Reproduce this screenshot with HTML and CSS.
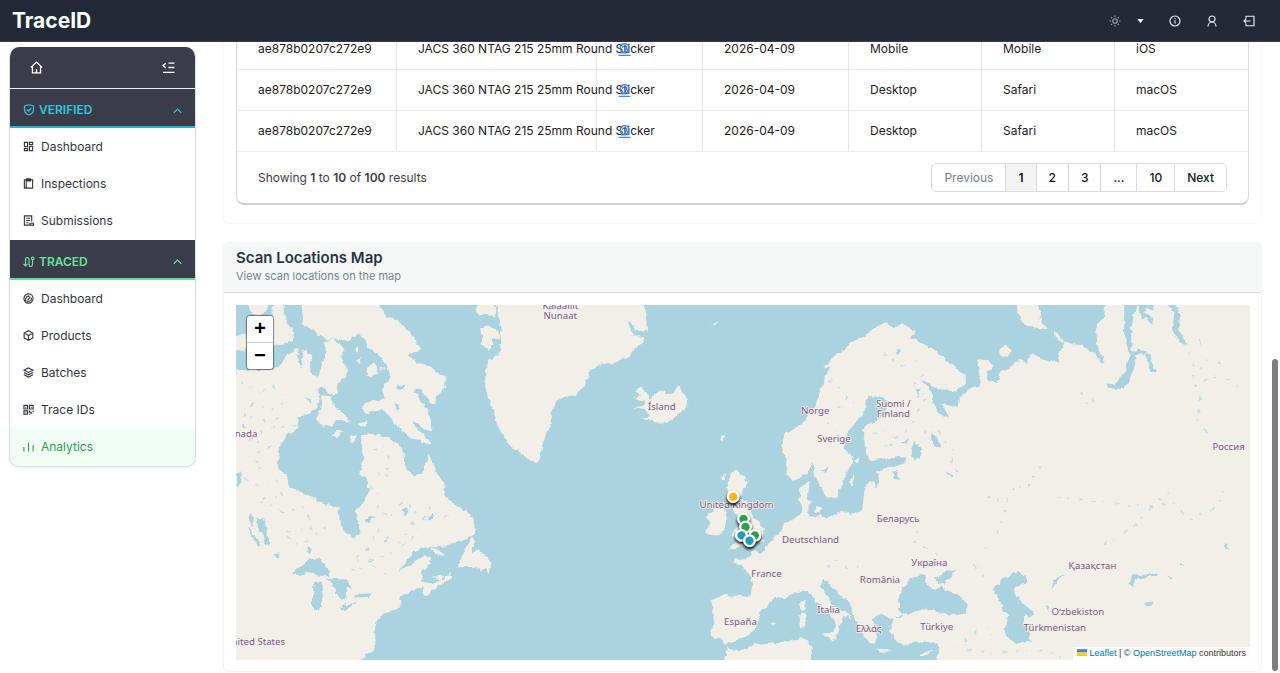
FILE: index.html
```html
<!DOCTYPE html>
<html lang="en">
<head>
<meta charset="utf-8">
<meta name="viewport" content="width=device-width, initial-scale=1">
<title>TraceID - Analytics</title>
<link rel="stylesheet" href="styles.css">
</head>
<body>
<header class="topbar">
  <a class="brand" href="#">TraceID</a>
  <nav class="topbar-actions" aria-label="Account">
    <button class="icon-btn theme-btn" type="button" aria-label="Theme">
      <svg class="sun" viewBox="0 0 24 24"><circle cx="12" cy="12" r="4.5"/><path d="M12 1v3M12 20v3M1 12h3M20 12h3M4.2 4.2l2.1 2.1M17.7 17.7l2.1 2.1M4.2 19.8l2.1-2.1M17.7 6.3l2.1-2.1"/></svg>
      <svg class="caret" viewBox="0 0 8 5"><path d="M0 0h8L4 5z"/></svg>
    </button>
    <button class="icon-btn" type="button" aria-label="Information"><svg viewBox="0 0 24 24"><circle cx="12" cy="12" r="10"/><path d="M12 11v6M12 6.5v2"/></svg></button>
    <button class="icon-btn" type="button" aria-label="Profile"><svg viewBox="0 0 24 24"><circle cx="12" cy="8" r="6"/><path d="M4 23c0-5 3.500-9 8-9s8 4 8 9"/></svg></button>
    <button class="icon-btn" type="button" aria-label="Log out"><svg viewBox="0 0 24 24"><path d="M6 7V2.500h16v19H6V17M15 12H2M6 8l-4 4 4 4"/></svg></button>
  </nav>
</header>

<div class="layout">
  <aside class="sidebar">
    <div class="sidebar-tools">
      <a href="#" aria-label="Home"><svg viewBox="0 0 24 24"><path d="M1.500 12L12 2l10.500 10M4.500 10v12h15V10M12 22v-7"/></svg></a>
      <button type="button" aria-label="Collapse menu"><svg viewBox="0 0 24 24"><path d="M12 4h11M12 12h11M2 21h21M7 4L2 8.500 7 13"/></svg></button>
    </div>
    <button class="group-head verified" type="button" aria-expanded="true">
      <svg viewBox="0 0 24 24"><path d="M12 22C6 20 3 16 3 11V4l9-2.500L21 4v7c0 5-3 9-9 11zM7.500 11l3.500 3.500 5.500-6"/></svg>
      <span>VERIFIED</span>
      <svg class="chevron" viewBox="0 0 24 24"><path d="M2 18l10-10 10 10"/></svg>
    </button>
    <nav class="menu" aria-label="Verified">
      <a href="#"><svg viewBox="0 0 24 24"><path d="M3 3h7v9H3zM14 3h7v5h-7zM14 12h7v9h-7zM3 16h7v5H3z"/></svg>Dashboard</a>
      <a href="#"><svg viewBox="0 0 24 24"><path d="M3 4h18v18H3zM8 1.500h8v5H8zM7 6v15"/></svg>Inspections</a>
      <a href="#"><svg viewBox="0 0 24 24"><path d="M19 14V2H3v20h12M7 7h8M7 12h8M7 17h5M15 18h8v4h-8z"/></svg>Submissions</a>
    </nav>
    <button class="group-head traced" type="button" aria-expanded="true">
      <svg viewBox="0 0 24 24"><path d="M1 16l4 4 4-4M5 20V8q0-5 3.500-5T12 8v8q0 5 3.500 5t3.500-5V7"/><circle cx="19.500" cy="4.500" r="2.500"/></svg>
      <span>TRACED</span>
      <svg class="chevron" viewBox="0 0 24 24"><path d="M2 18l10-10 10 10"/></svg>
    </button>
    <nav class="menu" aria-label="Traced">
      <a href="#"><svg viewBox="0 0 24 24"><circle cx="12" cy="12" r="10"/><path d="M6 18c-2-7 2-12 8-11M18 10c1 3 0 6-1 8M10 16l6-8M8 18h8"/></svg>Dashboard</a>
      <a href="#"><svg viewBox="0 0 24 24"><path d="M12 1.500l9.500 5v11l-9.500 5-9.500-5v-11zM2.500 6.500L12 12l9.500-5.500M12 12v10.500"/></svg>Products</a>
      <a href="#"><svg viewBox="0 0 24 24"><path d="M12 2l10 5-10 5L2 7zM2 12l10 5 10-5M2 17l10 5 10-5"/></svg>Batches</a>
      <a href="#"><svg viewBox="0 0 24 24"><path d="M2 3h8v8H2zM14 3h8v8h-8zM2 15h8v7H2zM14 14v4h4v4M22 14v4M14 22h2M22 21v1M6 6v2M18 6v2M6 18v1"/></svg>Trace IDs</a>
      <a href="#" class="active" aria-current="page"><svg viewBox="0 0 24 24"><path d="M2 13v10M12 3v20M22 9v14"/></svg>Analytics</a>
    </nav>
  </aside>

  <main class="content">
    <section class="panel scans">
      <div class="table-card">
        <table>
          <colgroup><col class="c-id"><col class="c-product"><col class="c-place"><col class="c-date"><col class="c-third"><col class="c-third"><col></colgroup>
          <tbody>
            <tr><td>ae878b0207c272e9</td><td>JACS 360 NTAG 215 25mm Round Sticker</td><td><a href="#" aria-label="Scan place"><svg viewBox="0 0 24 24"><circle cx="12" cy="9" r="8"/><path d="M1 23h22M8 9a4 4 0 1 1 5 4v4M5 18h10M18 10v9"/></svg></a></td><td>2026-04-09</td><td>Mobile</td><td>Mobile</td><td>iOS</td></tr>
            <tr><td>ae878b0207c272e9</td><td>JACS 360 NTAG 215 25mm Round Sticker</td><td><a href="#" aria-label="Scan place"><svg viewBox="0 0 24 24"><circle cx="12" cy="9" r="8"/><path d="M1 23h22M8 9a4 4 0 1 1 5 4v4M5 18h10M18 10v9"/></svg></a></td><td>2026-04-09</td><td>Desktop</td><td>Safari</td><td>macOS</td></tr>
            <tr><td>ae878b0207c272e9</td><td>JACS 360 NTAG 215 25mm Round Sticker</td><td><a href="#" aria-label="Scan place"><svg viewBox="0 0 24 24"><circle cx="12" cy="9" r="8"/><path d="M1 23h22M8 9a4 4 0 1 1 5 4v4M5 18h10M18 10v9"/></svg></a></td><td>2026-04-09</td><td>Desktop</td><td>Safari</td><td>macOS</td></tr>
          </tbody>
        </table>
        <div class="table-foot">
          <p>Showing <b>1</b> to <b>10</b> of <b>100</b> results</p>
          <nav class="pager" aria-label="Pages">
            <button type="button" disabled>Previous</button><button type="button" class="current" aria-current="page">1</button><button type="button">2</button><button type="button">3</button><button type="button">...</button><button type="button">10</button><button type="button">Next</button>
          </nav>
        </div>
      </div>
    </section>

    <section class="panel map-panel">
      <div class="panel-head">
        <h2>Scan Locations Map</h2>
        <p>View scan locations on the map</p>
      </div>
      <div class="map">
        <svg class="map-art" viewBox="18 15 3039 1065" preserveAspectRatio="xMidYMid slice" role="img" aria-label="Map of the North Atlantic and Europe">
          <defs>
            <filter id="coast" filterUnits="userSpaceOnUse" x="0" y="0" width="3080" height="1100">
              <feTurbulence type="fractalNoise" baseFrequency="0.05" numOctaves="3" seed="4" result="n"/>
              <feDisplacementMap in="SourceGraphic" in2="n" scale="18" xChannelSelector="R" yChannelSelector="G"/>
            </filter>
          </defs>
          <g filter="url(#coast)">
          <g class="land">
            <!-- North America -->
            <path d="M-20 1110V210H130L150 195 175 165 198 148 205 170 210 208 219 180 216 158 232 150 245 178 240 215 262 235 272 190 285 175 283 125 310 120 342 145 335 175 345 200 350 225 325 250 320 262 325 282 305 290 275 262 262 268 268 285 262 320 240 340 205 352 205 385 170 405 145 455 143 510 165 520 180 565 240 590 290 615 325 622 330 675 345 695 370 718 385 700 382 650 375 630 405 605 418 570 405 535 388 515 402 480 392 440 396 405 430 402 470 410 500 430 520 450 522 495 555 530 580 515 590 480 598 465 620 520 645 560 642 590 690 625 712 640 732 665 735 700 690 725 640 740 600 742 570 743 530 780 505 818 540 795 575 768 600 770 602 790 575 815 572 838 600 850 640 840 648 825 660 818 668 832 620 860 588 890 575 880 580 858 545 872 512 890 510 905 515 920 460 940 440 965 432 1000 437 1020 430 1050 395 1075 380 1110Z"/>
            <path d="M275 285L300 290 312 322 355 350 355 365 320 362 300 378 280 380 258 360 270 330Z"/>
            <path d="M45-10H118L110 38 75 45 60 35ZM130-10H157L165 60 182 85 190 120 160 132 120 135ZM0 105H50V150H0Z"/>
            <path d="M212-10L218 50 220 75 250 90 270 110 285 118 330 120 360 122 385 100 400 112 412 140 440 160 470 195 482 230 455 270 465 295 440 305 405 305 395 325 405 340 455 330 480 350 500 380 540 410 595 435 600 425 580 400 545 370 545 360 580 385 605 392 602 350 570 300 552 268 570 270 590 295 615 318 618 290 645 260 645 235 600 200 560 190 535 165 567 150 560 125 540 95 500 60 470 50 450 20 440-10Z"/>
            <path d="M410 205L425 190 440 198 442 222 425 232 410 228ZM448 200L466 205 455 210ZM308 405L320 388 334 390 322 412ZM362 405L376 403 374 425 364 425ZM388 372L410 362 412 370 398 380ZM375 150L388 142 385 162ZM378 180L390 175 385 192ZM600 745L615 745 645 765 625 767ZM600 825L620 832 642 828 628 842Z"/>
            <path d="M725 710L736 722 722 752 742 753 765 765 775 775 782 800 778 820 765 805 750 814 745 800 682 802 695 775 705 745Z"/>
            <!-- Greenland and the North Atlantic islands -->
            <path d="M795-10L805 50 815 80 810 110 810 150 795 175 772 180 765 215 765 265 775 290 790 340 800 370 820 410 850 450 870 455 895 480 920 488 930 470 935 440 945 405 965 370 960 340 985 295 1030 290 1065 260 1080 210 1095 200 1150 190 1195 170 1245 113 1215 107 1200 88 1192 62 1206 65 1215 88 1250 98 1248 60 1235-10Z"/>
            <path d="M735 25L760 5H795V50L770 45 745 50ZM750 85L780 80 810 100 805 118 780 115 790 135 775 150 755 135Z"/>
            <path d="M1208 296L1230 288 1214 272 1232 260 1250 278 1258 300 1270 282 1285 278 1300 272 1320 285 1335 265 1348 260 1355 278 1372 295 1374 315 1355 335 1335 355 1295 372 1265 360 1232 354 1255 345 1240 327 1212 322 1245 315 1240 302Z"/>
            <path d="M1440 80L1462 64 1456 76ZM1468 406L1484 410 1474 422Z"/>
            <!-- Britain and Ireland -->
            <path d="M1500 520L1520 508 1535 525 1552 548 1535 575 1525 590 1545 605 1565 640 1585 670 1604 690 1590 712 1602 722 1570 735 1535 735 1515 745 1490 750 1520 720 1505 705 1525 680 1520 650 1510 630 1515 605 1495 590 1490 560ZM1425 702L1440 672 1428 650 1450 628 1480 625 1490 645 1482 690 1455 706ZM1472 540L1482 520 1484 540Z"/>
            <!-- Eurasia -->
            <path d="M1655 425L1665 400 1695 385 1720 365 1745 330 1765 290 1780 240 1803 203 1775 205 1820 160 1860 130 1905 105 1940 80 1970 65 1985 85 2020 72 2052 100 2040 115 2075 128 2110 150 2160 190 2202 225 2202 255 2170 277 2130 270 2100 252 2072 240 2105 280 2110 320 2130 348 2155 352 2135 312 2180 322 2190 290 2220 265 2250 260 2248 215 2236 178 2270 180 2290 200 2265 215 2270 240 2300 247 2306 220 2340 200 2370 175 2390 192 2400 163 2440 180 2485 187 2485 160 2500 130 2530 130 2570 145 2610 185 2622 190 2600 140 2595 80 2620 50 2625-10H3090V1110H2118L2125 1030 2095 1030 2060 1025 2020 1037 1990 1020 1978 990 1985 957 1970 945 1940 945 1925 955 1937 975 1940 1000 1930 1030 1915 1025 1895 1000 1880 975 1872 945 1860 915 1830 885 1800 860 1795 840 1775 840 1768 855 1790 890 1815 920 1850 940 1858 957 1835 945 1832 965 1820 1002 1808 997 1815 965 1790 935 1755 905 1735 875 1710 870 1690 885 1660 895 1630 890 1605 925 1590 935 1580 970 1555 1005 1505 1025 1490 1037 1475 1018 1443 1015 1440 990 1450 960 1440 900 1480 885 1560 890 1566 850 1545 805 1508 785 1515 773 1545 778 1562 770 1565 752 1590 758 1620 725 1640 705 1665 665 1705 652 1715 630 1702 600 1710 560 1737 546 1732 590 1742 610 1725 640 1735 650 1765 648 1800 648 1835 635 1865 642 1895 625 1902 570 1908 550 1925 545 1935 530 1940 512 1980 500 2025 490 2025 472 1970 475 1910 482 1903 460 1900 385 1925 370 1960 345 1972 310 1960 295 1925 288 1910 290 1905 330 1875 370 1850 400 1840 440 1866 475 1860 500 1840 530 1830 570 1815 592 1790 597 1775 570 1755 530 1745 490 1735 510 1715 530 1690 542 1665 520 1668 480 1655 450Z"/>
            <path d="M2358-10L2360 45 2385 75 2410 82 2452 90 2430 60 2418-10ZM2465 97L2480 98 2502 128 2485 126ZM2308 150L2322 138 2338 150 2330 168 2312 170Z"/>
            <path d="M1755 618L1772 620 1770 642 1755 635ZM1858 540L1872 530 1862 560ZM1870 478L1888 476 1880 488ZM1710 905L1722 902 1722 932 1712 930ZM1706 940L1726 938 1724 975 1712 985ZM1770 1000L1822 998 1812 1025ZM1936 1048L1985 1052 1960 1058ZM2068 1062L2105 1045 2095 1062 2078 1068ZM1616 970L1634 966 1630 978ZM1650 965L1660 968Z"/>
            <path d="M1475 1110L1488 1045 1530 1052 1580 1030 1660 1025 1728 1015 1735 1030 1747 1045 1735 1110Z"/>
          </g>
          <g class="water">
            <!-- Inland seas and gulfs -->
            <path d="M2020 860L2035 838 2070 822 2085 835 2090 858 2120 868 2132 858 2145 868 2185 885 2212 915 2205 940 2170 945 2130 937 2090 925 2050 935 2030 947 2005 930 2005 900 2015 870ZM2108 838L2135 818 2178 810 2160 830 2140 850 2125 848ZM1990 950L2018 944 2008 954Z"/>
            <path d="M2290 865L2320 830 2365 815 2386 830 2382 855 2355 860 2345 870 2375 910 2390 918 2410 940 2395 950 2380 945 2380 970 2395 1000 2400 1025 2360 1030 2325 1010 2325 970 2335 950 2310 915 2295 880Z"/>
            <path d="M2680-10V50L2680 110 2695 165 2685 215 2655 250 2622 248 2635 265 2675 267 2695 240 2710 200 2710 166 2740 162 2755 190 2758 215 2778 218 2762 190 2755 165 2730 150 2702 154 2700 80 2728-10ZM2722-10L2725 45 2765 72 2765 60 2740 40 2742 25 2768 30 2765-10ZM2792-10L2830 40 2825 90 2850 127 2866 130 2845 90 2847 40 2820-10Z"/>
            <path d="M2695 850L2705 826 2780 820 2780 830 2720 834 2704 856ZM2740 912L2765 908 2760 918 2745 918ZM2815 825L2825 832 2822 842ZM2980 734L2992 734 2992 746 2982 746ZM2840 785L2862 798 2850 798ZM2462 870L2468 840 2510 822 2480 842ZM2444 918L2454 916 2454 930 2446 930Z"/>
            <!-- Lakes -->
            <path d="M185 822L235 775 265 773 292 800 298 828 270 827 245 815 210 825ZM250 850L274 840 278 860 270 920 258 932 248 920ZM285 835L350 838 367 866 347 858 348 890 335 902 325 882 308 887 315 865 300 845ZM318 925L382 903 350 928ZM370 895L390 882 425 880 420 893ZM80 652L98 655 115 700 118 735 106 732 100 705 84 690ZM52 680L62 690 80 710 92 738 80 735ZM230 742L244 742 242 760 230 758Z"/>
            <path d="M2040 445L2052 428 2074 445 2075 465 2062 478 2045 470ZM2102 400L2112 402 2130 435 2125 448 2108 430ZM1770 515L1790 502 1786 518ZM1925 522L1945 520 1948 550 1932 562ZM2145 515L2168 530 2160 535ZM1985 515L2000 512 2002 540 1990 535ZM1995 160L2010 148 2005 165ZM2015 430L2035 410 2028 430ZM2055 270L2070 265 2062 290ZM498 250L522 258 518 270 502 268ZM490 310L506 312 500 328ZM535 462L550 464 545 474ZM512 630L535 628 528 645ZM590 655L608 638 612 650 600 662ZM215 285L245 300 240 304ZM405 655L435 648 412 668ZM135 762L150 760 142 775ZM455 730L475 716 468 732ZM20 520L34 508 34 545 22 560ZM32 378L45 370 44 385ZM60 640L72 650 66 680 56 655Z"/>
          </g>
          <g class="streams">
            <path d="M30 250L85 275 130 260 170 300 120 330 70 310 40 350 100 360 160 355 200 375 110 385 60 420 120 440 50 470 100 500 40 530 90 560 140 540 160 590 80 600 170 640 220 620 250 680 160 700 210 740 300 670"/>
            <path d="M420 560L450 590 440 630 480 650 520 600 560 640 540 690 500 730 440 690 420 740 370 780 440 780 500 750 560 700 600 620 640 660 660 640M430 450L470 440 480 500 440 520 490 540M360 810L430 800 480 830 470 870"/>
            <path d="M1800 240L1850 290 1820 330 1870 310M1790 370L1830 400 1800 430M1930 400L1970 390 2000 430 1960 440 2020 400 2040 380 2060 330 2090 290 2050 260 2080 220 2110 200M1960 160L2010 200 2060 180M2080 400L2110 370 2140 420 2170 450 2160 500 2200 530"/>
            <path d="M2270 590L2330 610 2350 560 2380 560M2270 740L2230 790 2260 830M2300 700L2320 630 2330 615M2550 280L2570 310 2580 290 2600 330M2390 560L2430 500 2400 540M2480 590L2650 610 2750 620 2830 610 2870 660 2960 620 2980 570M2620 730L2700 690 2750 630 2830 570M2860 130L2885 160 2890 250 2910 290 2900 360 2930 400M2905 120L2915 140M2910 210L2925 180 2970 185M2920 240L2960 230 3000 245 3020 260M2060 690L2050 720 2090 750 2120 765M1790 800L1820 780 1860 810 1900 790M2280 1010L2270 980 2240 990 2180 1040 2270 1060 2430 1050 2500 1070"/>
          </g>
          </g>
          <g class="labels">
            <text x="990" y="28">Kalaallit</text><text x="990" y="59">Nunaat</text>
            <text x="48" y="412">nada</text><text x="85" y="1034">nited States</text>
            <text x="1294" y="331">Ísland</text><text x="1754" y="342">Norge</text><text x="1810" y="425">Sverige</text>
            <text x="1988" y="320">Suomi /</text><text x="1988" y="351">Finland</text><text x="2993" y="449">Россия</text>
            <text x="1518" y="623">United Kingdom</text><text x="2002" y="667">Беларусь</text><text x="1740" y="730">Deutschland</text>
            <text x="2096" y="798">Україна</text><text x="1608" y="830">France</text><text x="1948" y="850">România</text>
            <text x="1794" y="938">Italia</text><text x="1530" y="975">España</text><text x="1914" y="996">Ελλάς</text><text x="2118" y="991">Türkiye</text>
            <text x="2585" y="806">Қазақстан</text><text x="2541" y="945">Oʻzbekiston</text><text x="2472" y="993">Türkmenistan</text>
          </g>
          <g class="pins">
            <circle class="amber" cx="1508" cy="590" r="16"/><circle class="green" cx="1539" cy="657" r="16"/><circle class="green" cx="1545" cy="681" r="16"/><circle class="green" cx="1573" cy="706" r="16"/><circle class="teal" cx="1533" cy="706" r="16"/><circle class="teal" cx="1557" cy="722" r="16"/>
          </g>
        </svg>
        <div class="zoom-control"><button type="button" aria-label="Zoom in">+</button><button type="button" aria-label="Zoom out">−</button></div>
        <div class="attribution"><a href="#"><svg viewBox="0 0 12 8"><path fill="#4c7be1" d="M0 0h12v4H0z"/><path fill="#ffd500" d="M0 4h12v3H0z"/><path fill="#e0bc00" d="M0 7h12v1H0z"/></svg> Leaflet</a> | © <a href="#">OpenStreetMap</a> contributors</div>
      </div>
    </section>
  </main>
</div>
<div class="scroll-thumb"></div>
</body>
</html>
```

FILE: styles.css
```css
* { box-sizing: border-box; }
html, body { height: 100%; }
body { margin: 0; overflow: hidden; background: #fff; color: #1f2024; font: 12px/20px Inter, "Noto Sans", sans-serif; }
a { color: inherit; text-decoration: none; }
button { font: inherit; color: inherit; background: none; border: 0; padding: 0; cursor: pointer; }
p, h2 { margin: 0; }
svg { display: block; fill: none; stroke: currentColor; stroke-width: 2.4; }

.topbar { position: fixed; inset: 0 0 auto; z-index: 5; height: 42px; padding: 0 25px 0 12px; display: flex; align-items: center; justify-content: space-between; background: #222a37; color: #e8eaf0; border-bottom: 1px solid #3a3f50; }
.brand { font-size: 21px; font-weight: 700; color: #fff; }
.topbar-actions { display: flex; align-items: center; gap: 25px; }
.icon-btn svg { width: 12px; height: 12px; }
.theme-btn { display: flex; align-items: center; gap: 16px; }
.icon-btn .sun { color: #9da3b0; }
.icon-btn .caret { width: 7px; height: 4px; fill: #fff; stroke: none; }

.layout { display: flex; height: 100%; gap: 27px; padding: 0 18px 0 9px; }
.sidebar { flex: none; width: 187px; margin-top: 47px; align-self: flex-start; border: 1px solid #dcdfe3; border-top: 0; border-radius: 10px; overflow: hidden; background: #fff; box-shadow: 0 1px 2px #00000014; }
.sidebar-tools { display: flex; justify-content: space-between; align-items: center; height: 42px; padding: 0 20px; background: #3b3c4a; color: #fff; border-bottom: 1px solid #eef0f3; }
.sidebar-tools svg { width: 13px; height: 13px; }
.group-head { display: flex; align-items: center; gap: 4px; width: 100%; height: 39px; padding: 5px 13px 0; background: #3b3c4a; font-weight: 600; border-bottom: 2px solid; }
.group-head svg { width: 12px; height: 12px; }
.group-head .chevron { width: 9px; height: 9px; margin-left: auto; stroke-width: 3; }
.verified { color: #2bc8dc; border-color: #21b7cb; }
.traced { color: #69e29b; border-color: #69dc95; height: 40px; }
.menu { padding-bottom: 1px; }
.menu a { display: flex; align-items: center; gap: 7px; height: 37px; padding: 0 13px; color: #33363f; }
.menu svg { width: 11px; height: 11px; }
.menu .active { background: #f0fdf4; color: #2fa14f; }

.content { flex: 1; min-width: 0; display: flex; flex-direction: column; gap: 18px; padding-top: 29px; }
.panel { border: 1px solid #f7f7f8; border-radius: 6px; }
.scans { flex: none; border-top: 0; padding: 0 12px 18px; }
.table-card { border: 1px solid #dcdcde; border-top: 0; border-bottom: 2px solid #cfcfd1; border-radius: 0 0 8px 8px; }
table { width: 100%; table-layout: fixed; border-collapse: separate; border-spacing: 0; }
.c-id { width: 160px; } .c-product { width: 200px; } .c-place { width: 106px; } .c-date { width: 146px; } .c-third { width: 133px; }
td { height: 41px; padding: 0 0 0 21px; white-space: nowrap; border-right: 1px solid #e9e9ea; border-bottom: 1px solid #e9e9ea; }
td:last-child { border-right: 0; }
td svg { width: 13px; height: 13px; color: #4a86e0; }
.table-foot { display: flex; justify-content: space-between; align-items: center; height: 51px; padding: 0 21px; color: #3f4045; }
.table-foot b { font-weight: 600; }
.pager { display: flex; height: 29px; border: 1px solid #dcdcde; border-radius: 5px; overflow: hidden; color: #16171a; font-weight: 500; }
.pager button { padding: 0 12px; border-right: 1px solid #dcdcde; }
.pager button:last-child { border-right: 0; }
.pager button:disabled { color: #7b828c; font-weight: 400; }
.pager .current { background: #f3f3f4; font-weight: 600; }

.map-panel { flex: 1; display: flex; flex-direction: column; margin-bottom: 1px; border-color: #f3f3f4; }
.panel-head { height: 50px; padding: 5px 12px 0; background: #f6f8f8; border-bottom: 1px solid #dedfe1; }
.panel-head h2 { font-size: 15px; line-height: 20px; font-weight: 600; color: #2b3444; }
.panel-head p { font-size: 11px; line-height: 16px; color: #7a8290; }
.map { position: relative; flex: 1; min-height: 0; margin: 12px 11px 11px 12px; overflow: hidden; background: #aad3df; }
.map-art { position: absolute; inset: 0; width: 100%; height: 100%; }
.land { fill: #f2efe9; stroke: none; }
.water { fill: #aad3df; stroke: none; }
.streams { fill: none; stroke: #aad3df; stroke-width: 5; stroke-dasharray: 9 22 4 31 13 27; opacity: .6; }
.labels { font: 29px "Noto Sans", sans-serif; fill: #7d5a86; stroke: #f2efe9; stroke-width: 5; stroke-linejoin: round; paint-order: stroke; text-anchor: middle; }
.pins { stroke: #fff; stroke-width: 7; }
.pins circle { filter: drop-shadow(0 6px 5px #000); }
.amber { fill: #f5b81c; } .green { fill: #28a344; } .teal { fill: #219fba; }
.zoom-control { position: absolute; top: 10px; left: 10px; display: grid; border: 1px solid #00000066; border-radius: 4px; background-clip: padding-box; overflow: hidden; box-shadow: 0 0 1px #00000066; }
.zoom-control button { width: 26px; height: 26px; background: #fff; color: #000; font: bold 20px/28px "Liberation Mono", monospace; }
.zoom-control button:first-child { height: 27px; border-bottom: 1px solid #ccc; }
.attribution { position: absolute; right: 0; bottom: 0; padding: 0 4px; background: #ffffffcc; color: #333; font: 9px/13px "Liberation Sans", sans-serif; }
.attribution a { color: #0078a8; }
.attribution svg { display: inline; width: 10px; height: 7px; stroke: none; }
.scroll-thumb { position: fixed; right: 2px; bottom: 2px; width: 6px; height: 312px; border-radius: 3px; background: #7e7e7e; }
```
